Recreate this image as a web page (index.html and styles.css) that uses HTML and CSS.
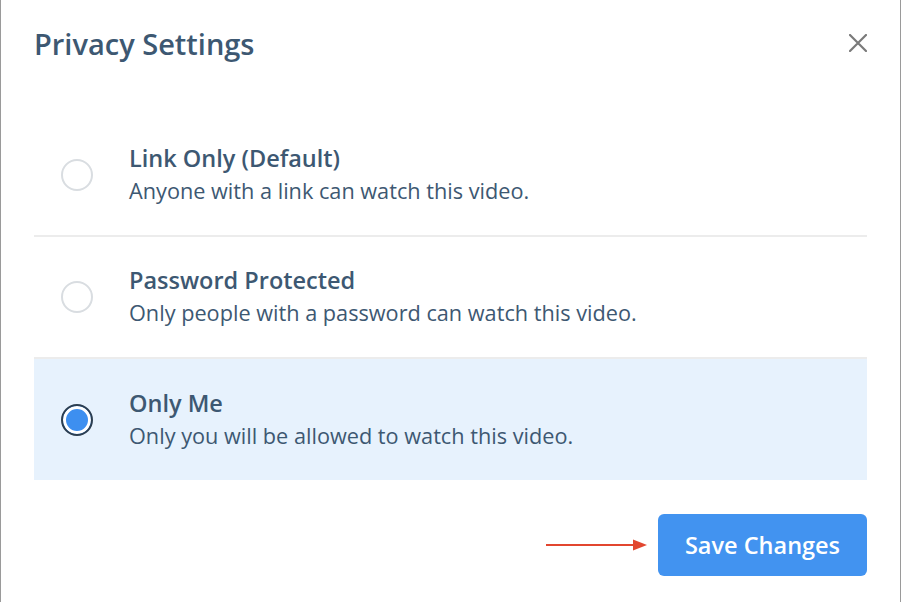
FILE: index.html
```html
<!DOCTYPE html>
<html>
<head>
<meta charset="utf-8">
<link rel="stylesheet" href="styles.css">
</head>
<body>
<div class="modal">
  <div class="header">
    <h1 class="title">Privacy Settings</h1>
    <button class="close" aria-label="Close">
      <svg width="18" height="18" viewBox="0 0 18 18"><path d="M1 1L17 17M17 1L1 17" stroke="#7a7a7a" stroke-width="2.2" stroke-linecap="round"/></svg>
    </button>
  </div>
  <div class="options">
    <div class="option">
      <span class="radio"></span>
      <div class="text">
        <div class="opt-title">Link Only (Default)</div>
        <div class="opt-desc">Anyone with a link can watch this video.</div>
      </div>
    </div>
    <div class="option">
      <span class="radio"></span>
      <div class="text">
        <div class="opt-title">Password Protected</div>
        <div class="opt-desc">Only people with a password can watch this video.</div>
      </div>
    </div>
    <div class="option selected">
      <span class="radio checked"></span>
      <div class="text">
        <div class="opt-title">Only Me</div>
        <div class="opt-desc">Only you will be allowed to watch this video.</div>
      </div>
    </div>
  </div>
  <div class="footer">
    <svg class="arrow" width="102" height="14" viewBox="0 0 102 14"><path d="M0 7H90" stroke="#e2462f" stroke-width="2"/><path d="M87 1.5L101 7L87 12.5Z" fill="#e2462f"/></svg>
    <button class="save">Save Changes</button>
  </div>
</div>
</body>
</html>
```
FILE: styles.css
```css
* { box-sizing: border-box; }
html, body { margin: 0; padding: 0; background: #fff; }
body { font-family: "Open Sans", "Liberation Sans", sans-serif; color: #3d5872; }
.modal {
  width: 901px;
  height: 602px;
  border-left: 1px solid #9a9a9a;
  border-right: 1px solid #9a9a9a;
  padding: 0 33px 0 33px;
  display: flex;
  flex-direction: column;
}
.header {
  display: flex;
  align-items: center;
  justify-content: space-between;
  height: 86px;
}
.title {
  margin: 0;
  font-size: 29px;
  font-weight: 600;
  color: #3d5872;
  letter-spacing: 0;
}
.close {
  border: 0;
  background: none;
  padding: 0;
  width: 18px;
  height: 18px;
  display: flex;
}
.options {
  margin-top: 29px;
  display: flex;
  flex-direction: column;
}
.option {
  display: flex;
  align-items: center;
  height: 122px;
  padding-left: 27px;
  border-bottom: 2px solid #ececec;
  gap: 36px;
}
.option.selected {
  background: #e7f2fd;
  border-bottom: 0;
  height: 121px;
}
.radio {
  width: 32px;
  height: 32px;
  border-radius: 50%;
  border: 2px solid #d9dde1;
  background: #fff;
  flex: none;
}
.radio.checked {
  border: 2px solid #2c3e50;
  box-shadow: inset 0 0 0 3px #fff;
  background: #3d8ff0;
}
.text { display: flex; flex-direction: column; }
.opt-title {
  font-size: 23.5px;
  font-weight: 600;
  line-height: 32px;
}
.opt-desc {
  font-size: 21.7px;
  line-height: 34px;
}
.footer {
  display: flex;
  align-items: center;
  justify-content: flex-end;
  gap: 10px;
  margin-top: 34px;
}
.arrow { display: block; }
.save {
  width: 209px;
  height: 62px;
  border: 0;
  border-radius: 6px;
  background: #4293f0;
  color: #fff;
  font-family: "Open Sans", "Liberation Sans", sans-serif;
  font-size: 23.5px;
  font-weight: 600;
}
```
